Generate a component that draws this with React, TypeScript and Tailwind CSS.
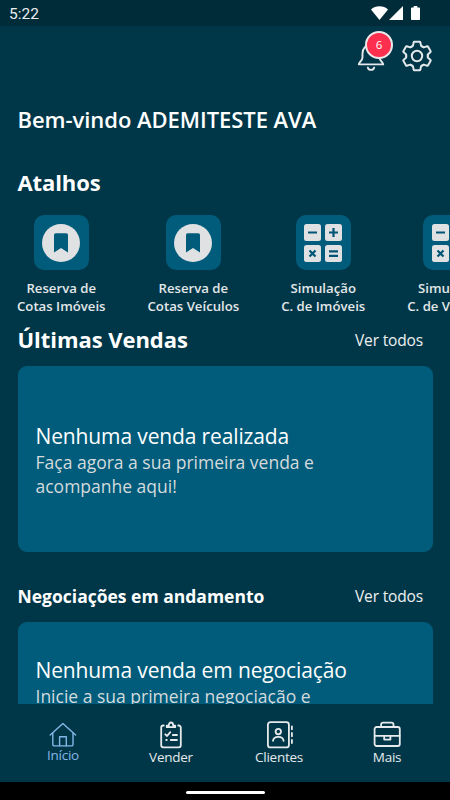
import React from 'react';

function StatusBar() {
  return (
    <div className="flex h-[26px] shrink-0 items-center bg-[#002b38] pr-[30px] pl-[9px]">
      <span className="pt-[1px] font-['Roboto',sans-serif] text-[15.5px] leading-[26px] text-[#eceff0]">5:22</span>
      <div className="ml-auto flex items-center text-white">
        <svg width="17" height="14" viewBox="0 0 17 14" fill="currentColor">
          <path d="M8.5 14 0 3.4C2.3 1.4 5.2.2 8.5.2s6.200 1.200 8.500 3.200z" />
        </svg>
        <svg className="ml-[1px]" width="14" height="14" viewBox="0 0 14 14" fill="currentColor">
          <path d="M14 0v14H0z" />
        </svg>
        <svg className="ml-[8px]" width="9" height="14" viewBox="0 0 9 14" fill="currentColor">
          <path d="M2.700 0h3.600v1.500H8c.6 0 1 .4 1 1V13c0 .6-.4 1-1 1H1c-.6 0-1-.4-1-1V2.500c0-.6.4-1 1-1h1.700z" />
        </svg>
      </div>
    </div>
  );
}

function BellIcon() {
  return (
    <svg width="28" height="32" viewBox="0 0 28 32" fill="none" stroke="#e4e8ea" strokeWidth="1.900" strokeLinecap="round" strokeLinejoin="round">
      <path d="M14 4.500c-5 0-8.500 4-8.500 9v4c0 3-3.500 4.300-3.700 6.900h24.400c-.2-2.600-3.700-3.900-3.700-6.900v-4c0-5-3.500-9-8.500-9z" />
      <path d="M10.800 27.600c.5 1.500 1.700 2.300 3.200 2.300s2.700-.8 3.200-2.300" />
    </svg>
  );
}

function GearIcon() {
  return (
    <svg width="32" height="32" viewBox="-16 -16 32 32" fill="none" stroke="#e4e8ea" strokeWidth="2" strokeLinecap="round" strokeLinejoin="round">
      {[0, 60, 120, 180, 240, 300].map((angle) => (
        <path key={angle} transform={`rotate(${angle})`} d="M-5.400-9.350-4.100-10.100-3.300-13.700Q-3.200-14.200-2.700-14.200H2.700Q3.200-14.200 3.300-13.700L4.100-10.100 5.400-9.350" />
      ))}
      <circle r="5.200" />
    </svg>
  );
}

function BookmarkIcon() {
  return (
    <svg width="38" height="38" viewBox="0 0 38 38">
      <circle cx="19" cy="19" r="19" fill="#e0e1e2" />
      <path d="M13.700 9.300h10.600a1.700 1.700 0 0 1 1.700 1.700v17.500l-7-4.500-7 4.500V11a1.700 1.700 0 0 1 1.700-1.700z" fill="#005c7a" />
    </svg>
  );
}

function CalculatorIcon() {
  return (
    <svg width="38" height="38" viewBox="0 0 38 38" fill="none" stroke="#005577" strokeWidth="2.200">
      <g fill="#e0e1e2" stroke="none">
        <rect width="17" height="17" rx="2.500" />
        <rect x="21" width="17" height="17" rx="2.500" />
        <rect y="21" width="17" height="17" rx="2.500" />
        <rect x="21" y="21" width="17" height="17" rx="2.500" />
      </g>
      <path d="M4 8.500h9M25 8.500h9M29.500 4v9M5.500 26.500l6 6M11.500 26.500l-6 6M25 27.300h9M25 31.800h9" />
    </svg>
  );
}

function HomeIcon() {
  return (
    <svg width="28" height="28" viewBox="0 0 28 28" fill="none" stroke="currentColor" strokeWidth="1.400" strokeLinecap="round" strokeLinejoin="round">
      <path d="M1.200 14 13.900 2.600l12.700 11.400" />
      <path d="M3.800 12.200v11.200c0 .9.600 1.500 1.500 1.500h17.200c.9 0 1.500-.6 1.500-1.500V12.200" />
      <path d="M10.600 24.700v-8.900h6.700v8.900" />
    </svg>
  );
}

function SellIcon() {
  return (
    <svg width="28" height="28" viewBox="0 0 28 28" fill="none" stroke="currentColor" strokeWidth="1.800" strokeLinecap="round" strokeLinejoin="round">
      <path d="M6.800 4.500H6.300C5 4.500 4.200 5.300 4.200 6.500v17.800c0 1.200.8 2 2.100 2h15.400c1.300 0 2.100-.8 2.100-2V6.500c0-1.200-.8-2-2.100-2h-.5" />
      <path d="M9.800 6.200V4.600h2C11.800 2.600 12.700 1.500 14 1.500s2.200 1.100 2.200 3.100h2v1.600z" />
      <path d="m8.300 13.300 1.800 1.700 3.200-3.900M15.800 14h4.200M13.800 19h6.200M9.200 19h.6" />
    </svg>
  );
}

function ClientsIcon() {
  return (
    <svg width="28" height="28" viewBox="0 0 28 28" fill="none" stroke="currentColor" strokeWidth="1.800" strokeLinecap="round" strokeLinejoin="round">
      <rect x="2.900" y="1.200" width="21" height="25.200" rx="2.500" />
      <circle cx="13.300" cy="10.600" r="2.700" />
      <path d="M8 19.800c.3-2.500 2.500-4 5.300-4s5 1.500 5.300 4" />
      <path d="M26.900 5.300v3M26.900 12v3.300M26.900 19v3" />
    </svg>
  );
}

function MoreIcon() {
  return (
    <svg width="28" height="28" viewBox="0 0 28 28" fill="none" stroke="currentColor" strokeWidth="1.800" strokeLinecap="round" strokeLinejoin="round">
      <rect x="1.600" y="6" width="25.200" height="19" rx="2" />
      <path d="M8.100 5.800V3.600c0-1.300.7-2 2-2h8.400c1.300 0 2 .7 2 2v2.200M1.700 14.800h25" />
      <path d="M11.200 15v3.600h6.200V15" />
    </svg>
  );
}

const shortcuts = [
  { line1: 'Reserva de', line2: 'Cotas Imóveis', icon: <BookmarkIcon /> },
  { line1: 'Reserva de', line2: 'Cotas Veículos', icon: <BookmarkIcon /> },
  { line1: 'Simulação', line2: 'C. de Imóveis', icon: <CalculatorIcon /> },
  { line1: 'Simulação', line2: 'C. de Veículos', icon: <CalculatorIcon /> },
];

const tabs = [
  { label: 'Início', icon: <HomeIcon />, active: true },
  { label: 'Vender', icon: <SellIcon />, active: false },
  { label: 'Clientes', icon: <ClientsIcon />, active: false },
  { label: 'Mais', icon: <MoreIcon />, active: false },
];

export default function App() {
  return (
    <div className="flex h-[800px] w-[450px] flex-col overflow-hidden bg-[#003748] font-['Open_Sans',sans-serif] text-white">
      <StatusBar />

      <main className="min-h-0 flex-1 overflow-hidden">
        {/* Header */}
        <div className="flex h-[60px] items-start justify-end gap-[16px] pt-[14px] pr-[17px]">
          <button type="button" className="relative block">
            <BellIcon />
            <span className="absolute top-[-9px] left-[8px] flex h-[28px] w-[28px] items-center justify-center rounded-full border-2 border-[#e8e8ea] bg-[#fc2f4e] text-[11.500px] leading-none">
              6
            </span>
          </button>
          <button type="button" className="block">
            <GearIcon />
          </button>
        </div>

        <h1 className="mt-[18px] pl-[17.500px] text-[22px] leading-[30px] font-semibold tracking-[-0.050px]">
          Bem-vindo ADEMITESTE AVA
        </h1>

        <h2 className="mt-[33px] pl-[17.500px] text-[22px] leading-[30px] font-bold tracking-[-0.100px]">Atalhos</h2>

        {/* Shortcuts */}
        <div className="mt-[18px] flex gap-[42px] overflow-hidden pl-[17px]">
          {shortcuts.map((item) => (
            <button key={item.line1 + item.line2} type="button" className="flex shrink-0 flex-col items-center">
              <span className="flex h-[55px] w-[55px] items-center justify-center rounded-[10px] bg-[#005c7a]">
                {item.icon}
              </span>
              <span className="mt-[9px] text-center text-[13.200px] leading-[18px] font-semibold whitespace-nowrap text-[#e3e7e9]">
                {item.line1}
                <br />
                {item.line2}
              </span>
            </button>
          ))}
        </div>

        {/* Last sales */}
        <div className="mt-[9px] flex h-[30px] items-center justify-between pr-[27px] pl-[17.500px]">
          <h2 className="text-[22px] leading-[30px] font-bold tracking-[-0.050px]">Últimas Vendas</h2>
          <a className="pt-[3px] text-[15.500px] tracking-[-0.150px] text-[#eef0f1]">Ver todos</a>
        </div>
        <section className="mx-[17.500px] mt-[11.500px] flex h-[186px] flex-col justify-center rounded-[9px] bg-[#005c7a] px-[18px] pt-[2px]">
          <h3 className="text-[21px] leading-[28px] tracking-[-0.130px]">Nenhuma venda realizada</h3>
          <p className="w-[300px] text-[17.500px] leading-[24px] text-[#d5dadd]">
            Faça agora a sua primeira venda e acompanhe aqui!
          </p>
        </section>

        {/* Ongoing negotiations */}
        <div className="mt-[29px] flex h-[30px] items-center justify-between pr-[27px] pl-[17.500px]">
          <h2 className="text-[17.500px] leading-[30px] font-bold">Negociações em andamento</h2>
          <a className="pt-[2px] text-[15.500px] tracking-[-0.150px] text-[#eef0f1]">Ver todos</a>
        </div>
        <section className="mx-[17.500px] mt-[11px] h-[186px] rounded-[9px] bg-[#005c7a] px-[18px] pt-[34px]">
          <h3 className="text-[21px] leading-[28px] tracking-[-0.130px]">Nenhuma venda em negociação</h3>
          <p className="w-[300px] text-[17.500px] leading-[24px] text-[#d5dadd]">
            Inicie a sua primeira negociação e acompanhe aqui!
          </p>
        </section>
      </main>

      <nav className="flex h-[78px] shrink-0 px-[9px] pt-[17px]">
        {tabs.map((tab) => (
          <button
            key={tab.label}
            type="button"
            className={`flex flex-1 flex-col items-center ${tab.active ? 'text-[#86b6e6]' : 'text-[#e6eaec]'}`}
          >
            {tab.icon}
            <span className={`text-[13.500px] leading-[18px] tracking-[-0.250px] ${tab.active ? 'mt-[-3px]' : 'mt-[-1px]'}`}>
              {tab.label}
            </span>
          </button>
        ))}
      </nav>

      <div className="flex h-[18px] shrink-0 items-center justify-center bg-black">
        <div className="mt-[2px] h-[3px] w-[79px] rounded-full bg-white" />
      </div>
    </div>
  );
}
